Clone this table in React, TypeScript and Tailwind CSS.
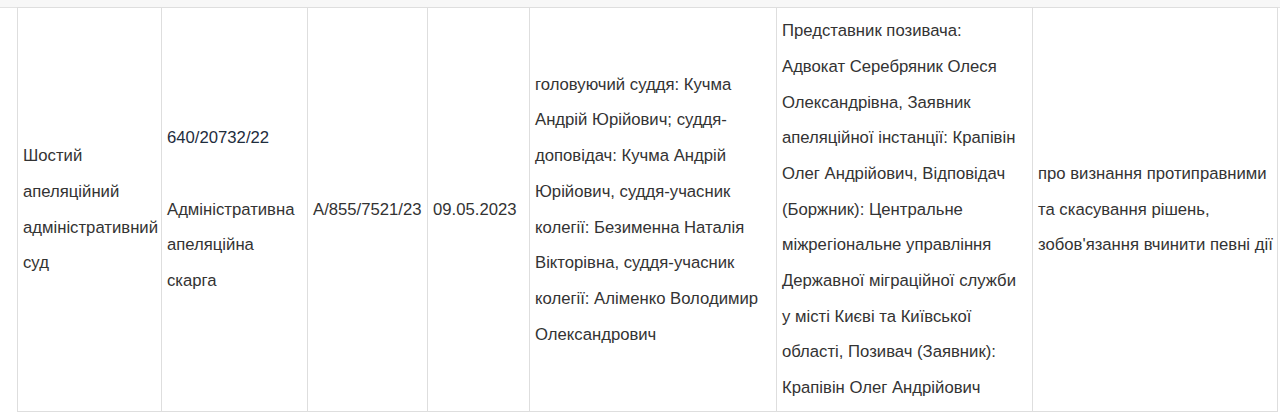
import React from 'react';

interface CaseRow {
  court: string[];
  caseNo: string;
  kind: string[];
  proceeding: string;
  date: string;
  judges: string[];
  parties: string[];
  subject: string[];
}

const row: CaseRow = {
  court: ['Шостий', 'апеляційний', 'адміністративний', 'суд'],
  caseNo: '640/20732/22',
  kind: ['Адміністративна', 'апеляційна', 'скарга'],
  proceeding: 'A/855/7521/23',
  date: '09.05.2023',
  judges: [
    'головуючий суддя: Кучма',
    'Андрій Юрійович; суддя-',
    'доповідач: Кучма Андрій',
    'Юрійович, суддя-учасник',
    'колегії: Безименна Наталія',
    'Вікторівна, суддя-учасник',
    'колегії: Аліменко Володимир',
    'Олександрович',
  ],
  parties: [
    'Представник позивача:',
    'Адвокат Серебряник Олеся',
    'Олександрівна, Заявник',
    'апеляційної інстанції: Крапівін',
    'Олег Андрійович, Відповідач',
    '(Боржник): Центральне',
    'міжрегіональне управління',
    'Державної міграційної служби',
    'у місті Києві та Київської',
    'області, Позивач (Заявник):',
    'Крапівін Олег Андрійович',
  ],
  subject: ['про визнання протиправними', 'та скасування рішень,', "зобов'язання вчинити певні дії"],
};

const cell = 'border border-[#dedede] px-[5px] py-[4px] align-middle whitespace-nowrap';

const Lines: React.FC<{ lines: string[] }> = ({ lines }) => (
  <>
    {lines.map((line) => (
      <div key={line}>{line}</div>
    ))}
  </>
);

const App: React.FC = () => {
  return (
    <div className="w-[1280px] h-[414px] bg-white overflow-hidden font-['Liberation_Sans',Arial,sans-serif] text-[16.7px] leading-[35.7px] text-[#333]">
      <div className="h-[8px] bg-[#f7f7f7] border-b border-[#e2e2e2]" />
      <table className="ml-[17px] border-collapse table-fixed w-[1260px] -mt-px">
        <colgroup>
          <col className="w-[144px]" />
          <col className="w-[146px]" />
          <col className="w-[120px]" />
          <col className="w-[102px]" />
          <col className="w-[247px]" />
          <col className="w-[256px]" />
          <col className="w-[245px]" />
        </colgroup>
        <tbody>
          <tr className="h-[404px]">
            <td className={cell}>
              <Lines lines={row.court} />
            </td>
            <td className={cell}>
              <div className="text-[#1f2d3d]">{row.caseNo}</div>
              <div>&nbsp;</div>
              <Lines lines={row.kind} />
            </td>
            <td className={cell}>{row.proceeding}</td>
            <td className={cell}>{row.date}</td>
            <td className={cell}>
              <Lines lines={row.judges} />
            </td>
            <td className={cell}>
              <Lines lines={row.parties} />
            </td>
            <td className={cell}>
              <Lines lines={row.subject} />
            </td>
          </tr>
        </tbody>
      </table>
    </div>
  );
};

export default App;
